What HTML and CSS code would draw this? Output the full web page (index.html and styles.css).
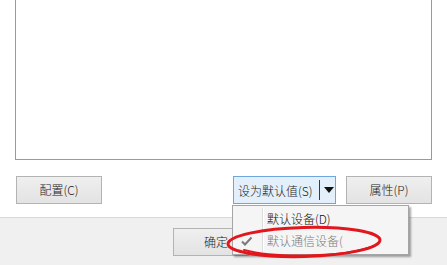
FILE: index.html
```html
<!DOCTYPE html>
<html>
<head>
<meta charset="utf-8">
<link rel="stylesheet" href="styles.css">
</head>
<body>
<div class="dialog">
  <div class="top">
    <div class="listbox"></div>
    <div class="btnrow">
      <div class="btn btn-config">配置(C)</div>
      <div class="split">
        <span class="split-label">设为默认值(S)</span>
        <span class="split-sep"></span>
        <span class="split-arrow"></span>
      </div>
      <div class="btn btn-prop">属性(P)</div>
    </div>
  </div>
  <div class="footer">
    <div class="btn btn-ok">确定</div>
  </div>
  <div class="menu">
    <div class="gutter"></div>
    <div class="item">默认设备(D)</div>
    <div class="item disabled">
      <svg class="check" width="12" height="10" viewBox="0 0 12 10"><path d="M1 5.5 L4 8.5 L10.5 1.5" fill="none" stroke="#7a7a7a" stroke-width="2"/></svg>
      默认通信设备(
    </div>
  </div>
  <svg class="ring" width="170" height="40" viewBox="0 0 170 40">
    <ellipse cx="80" cy="18" rx="76" ry="14.5" transform="rotate(-1.5 80 18)" fill="none" stroke="#e2161d" stroke-width="3"/>
    <path d="M20 26 C 50 34, 120 34, 150 22" fill="none" stroke="#e2161d" stroke-width="2" stroke-linecap="round"/>
  </svg>
</div>
</body>
</html>
```
FILE: styles.css
```css
* { box-sizing: border-box; }
html, body { margin: 0; padding: 0; }
body {
  width: 447px;
  height: 265px;
  overflow: hidden;
  background: #ffffff;
  font-family: "Noto Sans CJK SC", "Microsoft YaHei", sans-serif;
  font-size: 12px;
  font-weight: 300;
  color: #1a1a1a;
}
.dialog {
  position: relative;
  width: 447px;
  height: 265px;
}
.top {
  height: 217px;
  padding-left: 15px;
  background: #ffffff;
}
.listbox {
  width: 417px;
  height: 160px;
  border: 1px solid #9a9a9a;
  border-top: none;
  background: #ffffff;
}
.btnrow {
  display: flex;
  margin-top: 16px;
  padding-left: 1px;
  height: 28px;
}
.btn {
  display: flex;
  align-items: center;
  justify-content: center;
  height: 28px;
  border: 1px solid #b3b3b3;
  background: linear-gradient(#efefef, #e3e3e3);
  line-height: 1;
}
.btn-config { width: 86px; }
.split {
  display: flex;
  align-items: center;
  margin-left: 131px;
  width: 103px;
  height: 28px;
  border: 1px solid #6da6dc;
  background: #e3f0fb;
}
.split-label {
  padding-left: 4px;
  width: 85px;
}
.split-sep {
  width: 1px;
  height: 20px;
  background: #3a3a3a;
}
.split-arrow {
  margin-left: 4px;
  width: 0;
  height: 0;
  border-left: 5px solid transparent;
  border-right: 5px solid transparent;
  border-top: 6px solid #111;
}
.btn-prop { width: 86px; margin-left: 10px; }
.footer {
  height: 48px;
  border-top: 1px solid #d9d9d9;
  background: #f0f0f0;
  padding-left: 173px;
  padding-top: 10px;
}
.btn-ok { width: 76px; justify-content: flex-start; padding-left: 30px; }
.menu {
  position: absolute;
  left: 232px;
  top: 205px;
  width: 177px;
  height: 50px;
  background: #f5f5f5;
  border: 1px solid #a5a5a5;
  box-shadow: 2px 2px 2px rgba(0,0,0,0.35);
  padding-top: 2px;
}
.gutter {
  position: absolute;
  left: 29px;
  top: 2px;
  bottom: 2px;
  width: 2px;
  border-left: 1px solid #dcdcdc;
  border-right: 1px solid #ffffff;
}
.item {
  position: relative;
  height: 22px;
  line-height: 22px;
  padding-left: 34px;
  color: #111;
}
.item.disabled { color: #7b7b7b; }
.check {
  position: absolute;
  left: 8px;
  top: 6px;
}
.ring {
  position: absolute;
  left: 224px;
  top: 224px;
}
```
